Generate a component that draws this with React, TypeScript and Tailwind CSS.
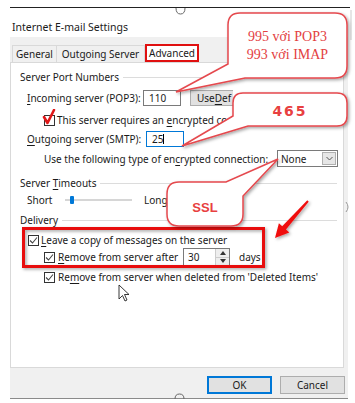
import React from "react";

const U = ({ children }: { children: React.ReactNode }) => (
  <span className="underline underline-offset-[2px] decoration-[1px]">{children}</span>
);

const Check = ({ checked = true }: { checked?: boolean }) => (
  <div className="w-[11px] h-[11px] border border-[#333] bg-white flex items-center justify-center shrink-0">
    {checked && (
      <svg width="9" height="9" viewBox="0 0 9 9">
        <path d="M1 4.5 L3.5 7 L8 1.5" fill="none" stroke="#444" strokeWidth="1.1" />
      </svg>
    )}
  </div>
);

const GroupHeader = ({ children }: { children: React.ReactNode }) => (
  <div className="flex items-center h-[14px] ml-[9px] mr-[6px]">
    <span className="whitespace-nowrap">{children}</span>
    <div className="flex-1 h-px bg-[#dcdcdc] ml-[4px]" />
  </div>
);

export default function App() {
  return (
    <div
      className="relative w-[355px] h-[403px] bg-white overflow-hidden text-[10px] text-[#1a1a1a] leading-none"
      style={{ fontFamily: '"Noto Sans", "Open Sans", sans-serif' }}
    >
      <div className="h-[7px]" />
      <div className="ml-[10px] w-[340px] h-px bg-[#222]" />
      <div className="h-[29px] flex items-center pt-[9px] pl-[12px] text-[10.5px]">
        Internet E-mail Settings
      </div>

      {/* dialog gray */}
      <div className="ml-[10px] w-[338px] h-[362px] bg-[#f0f0f0] border-b border-[#8a8a8a] flex flex-col">
        {/* tabs */}
        <div className="h-[25px] flex items-end pl-[2px]">
          <div className="w-[45px] h-[17px] border border-b-0 border-[#d9d9d9] flex items-center justify-center">
            General
          </div>
          <div className="w-[88px] h-[17px] border border-b-0 border-l-0 border-[#d9d9d9] flex items-center justify-center">
            Outgoing Server
          </div>
          <div className="w-[54px] h-[18px] bg-white border-2 border-b-2 border-[#e01010] flex items-center justify-center">
            Advanced
          </div>
        </div>

        {/* panel */}
        <div className="w-[334px] h-[306px] bg-white border border-[#d9d9d9] flex flex-col">
          <div className="mt-[7px]">
            <GroupHeader>Server Port Numbers</GroupHeader>
          </div>

          {/* incoming */}
          <div className="mt-[6px] flex items-center h-[16px] ml-[16px]">
            <span className="w-[116px] whitespace-nowrap">
              <U>I</U>ncoming server (POP3):
            </span>
            <div className="w-[38px] h-[16px] border border-[#7a7a7a] flex items-center pl-[5px]">110</div>
            <div className="ml-[9px] w-[43px] h-[16px] bg-[#e1e1e1] border border-r-0 border-[#adadad] flex items-center pl-[6px] whitespace-nowrap">
              Use <U>D</U>ef
            </div>
          </div>

          {/* encrypted checkbox */}
          <div className="mt-[6px] flex items-center h-[16px] ml-[33px] relative">
            <Check checked={false} />
            <span className="ml-[2px] whitespace-nowrap">
              This server requires an <U>e</U>ncrypted co
            </span>
            <svg className="absolute left-[-2px] top-[-3px]" width="14" height="16" viewBox="0 0 14 16">
              <path d="M2 8 L5.5 14 L12 1" fill="none" stroke="#e01818" strokeWidth="2.6" strokeLinecap="round" strokeLinejoin="round" />
            </svg>
          </div>

          {/* outgoing */}
          <div className="mt-[3px] flex items-center h-[16px] ml-[16px]">
            <span className="w-[119px] whitespace-nowrap">
              <U>O</U>utgoing server (SMTP):
            </span>
            <div className="w-[38px] h-[16px] border border-[#0078d7] flex items-center pl-[5px]">
              25<span className="w-px h-[10px] bg-black" />
            </div>
          </div>

          {/* connection type */}
          <div className="mt-[3px] flex items-center h-[17px] ml-[33px]">
            <span className="w-[233px] whitespace-nowrap">
              Use the following type of en<U>c</U>rypted connection:
            </span>
            <div className="w-[61px] h-[17px] border border-[#7a7a7a] bg-white flex items-center">
              <span className="flex-1 pl-[3px]">None</span>
              <div className="w-[14px] h-[13px] mr-[1px] bg-[#e6e6e6] border border-[#b0b0b0] flex items-center justify-center">
                <svg width="7" height="5" viewBox="0 0 7 5">
                  <path d="M0.5 1 L3.5 4 L6.5 1" fill="none" stroke="#555" strokeWidth="1" />
                </svg>
              </div>
            </div>
          </div>

          <div className="mt-[9px]">
            <GroupHeader>
              Server <U>T</U>imeouts
            </GroupHeader>
          </div>

          {/* slider */}
          <div className="mt-[3px] flex items-center h-[14px] ml-[16px]">
            <span className="w-[38px]">Short</span>
            <div className="relative w-[67px] h-[2px] bg-[#d6d6d6]">
              <div className="absolute left-[5px] top-[-3px] w-[4px] h-[8px] bg-[#0078d7] rounded-[1px]" />
            </div>
            <span className="ml-[12px]">Long</span>
          </div>

          <div className="mt-[6px]">
            <GroupHeader>Delivery</GroupHeader>
          </div>

          {/* leave copy */}
          <div className="mt-[5px] flex items-center h-[16px] ml-[17px]">
            <Check />
            <span className="ml-[2px] whitespace-nowrap">
              <U>L</U>eave a copy of messages on the server
            </span>
          </div>

          {/* remove after */}
          <div className="flex items-center h-[18px] ml-[33px]">
            <Check />
            <span className="ml-[3px] w-[125px] whitespace-nowrap">
              <U>R</U>emove from server after
            </span>
            <div className="w-[47px] h-[18px] border border-[#7a7a7a] flex items-center">
              <span className="flex-1 pl-[4px]">30</span>
              <div className="w-[14px] h-full border-l border-[#ccc] flex flex-col">
                <div className="flex-1 bg-[#eee] flex items-center justify-center border-b border-[#ccc]">
                  <svg width="6" height="4" viewBox="0 0 6 4"><path d="M0 4 L3 0 L6 4Z" fill="#333" /></svg>
                </div>
                <div className="flex-1 bg-[#eee] flex items-center justify-center">
                  <svg width="6" height="4" viewBox="0 0 6 4"><path d="M0 0 L3 4 L6 0Z" fill="#333" /></svg>
                </div>
              </div>
            </div>
            <span className="ml-[9px]">days</span>
          </div>

          {/* remove when */}
          <div className="mt-[3px] flex items-center h-[16px] ml-[33px]">
            <Check />
            <span className="ml-[3px] whitespace-nowrap">
              Re<U>m</U>ove from server when deleted from 'Deleted Items'
            </span>
          </div>
        </div>

        {/* buttons */}
        <div className="mt-[8px] flex justify-end gap-[8px] pr-[3px]">
          <div className="w-[65px] h-[18px] bg-[#e1e1e1] border-2 border-[#0078d7] flex items-center justify-center">
            OK
          </div>
          <div className="w-[65px] h-[18px] bg-[#e1e1e1] border border-[#adadad] flex items-center justify-center">
            Cancel
          </div>
        </div>
      </div>

      {/* annotations overlay */}
      <svg className="absolute left-0 top-0 pointer-events-none" width="355" height="403" viewBox="0 0 355 403">
        <defs>
          <filter id="sh" x="-20%" y="-20%" width="140%" height="140%">
            <feDropShadow dx="1.5" dy="1.5" stdDeviation="1.5" floodColor="#000" floodOpacity="0.35" />
          </filter>
        </defs>
        {/* frame handles */}
        <path d="M176 8 Q176 14 180.5 14 Q185 14 185 8" fill="none" stroke="#666" strokeWidth="1" />
        <path d="M175 399 Q175 394 179.5 394 Q184 394 184 399" fill="none" stroke="#666" strokeWidth="1" />
        <path d="M346 212 Q350 207 346 202" fill="none" stroke="#999" strokeWidth="1" />
        <line x1="351" y1="10" x2="351" y2="40" stroke="#ccc" strokeWidth="1" />

        {/* red box around delivery */}
        <rect x="23.5" y="228.5" width="240" height="38" fill="none" stroke="#e81010" strokeWidth="3" filter="url(#sh)" />

        {/* callout 1 */}
        <path
          d="M240 13 H335 Q347 13 347 25 V66 Q347 78 335 78 H245 L176 92 L228 64 V25 Q228 13 240 13 Z"
          fill="#fff"
          stroke="#e5484d"
          strokeWidth="1.5"
          filter="url(#sh)"
        />
        {/* callout 2 */}
        <path
          d="M243 93 H337 Q347 93 347 103 V116 Q347 126 337 126 H248 L182 146 L233 116 V103 Q233 93 243 93 Z"
          fill="#fff"
          stroke="#e5484d"
          strokeWidth="1.5"
          filter="url(#sh)"
        />
        {/* callout 3 */}
        <path
          d="M179 182 H226 L278 159 L243 196 V214 Q243 226 231 226 H179 Q167 226 167 214 V194 Q167 182 179 182 Z"
          fill="#fff"
          stroke="#e5484d"
          strokeWidth="1.5"
          filter="url(#sh)"
        />
        {/* red arrow */}
        <polygon
          points="307.3,200.3 282.2,226.2 278.9,223.2 275,238 289.3,232.6 286,229.6 308.7,201.7"
          fill="#f01010"
          filter="url(#sh)"
        />
        {/* cursor */}
        <path
          d="M119 285 L119 299 L122.5 295.5 L125 301 L127 300 L124.5 294.5 L129 294.5 Z"
          fill="#fff"
          stroke="#222"
          strokeWidth="0.9"
          strokeLinejoin="round"
        />
      </svg>

      {/* callout texts */}
      <div
        className="absolute left-[228px] top-[28px] w-[119px] text-center text-[14px] leading-[18px] text-[#e3403f]"
        style={{ fontFamily: '"Liberation Serif", serif' }}
      >
        <div>995 với POP3</div>
        <div>993 với IMAP</div>
      </div>
      <div
        className="absolute left-[233px] top-[104px] w-[114px] text-center text-[14px] font-bold tracking-[2px] text-[#e84040]"
        style={{ fontFamily: '"DejaVu Sans", sans-serif' }}
      >
        465
      </div>
      <div
        className="absolute left-[167px] top-[201px] w-[76px] text-center text-[13px] font-bold text-[#e84040]"
        style={{ fontFamily: '"Liberation Sans", sans-serif' }}
      >
        SSL
      </div>
    </div>
  );
}
